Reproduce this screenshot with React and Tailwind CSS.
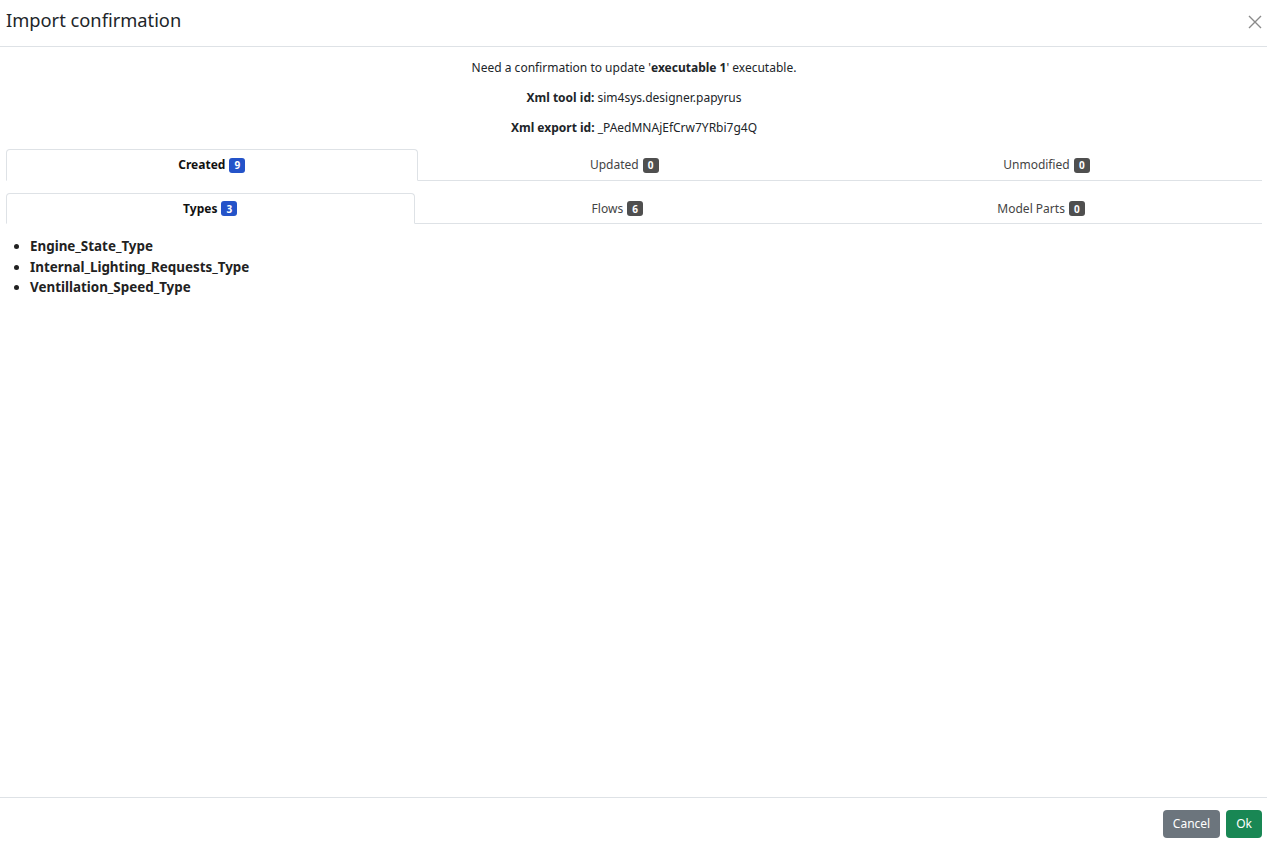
import React from "react";

function Badge({ n, blue }) {
  return (
    <span
      className={
        "ml-[4px] inline-flex h-[15px] min-w-[16px] items-center justify-center rounded-[3px] px-[5px] text-[10px] font-bold leading-none text-white " +
        (blue ? "bg-[#2453c9]" : "bg-[#4f4f4f]")
      }
    >
      {n}
    </span>
  );
}

function Tabs({ items, h }) {
  return (
    <div className="flex border-b border-[#dee2e6]">
      {items.map((t, i) => (
        <div
          key={t.label}
          className={
            "flex flex-auto items-center justify-center -mb-px rounded-t-[4px] border text-[12px] " +
            (t.active
              ? "border-[#dee2e6] border-b-white font-bold text-[#111]"
              : "border-transparent text-[#444]") +
            " " +
            h
          }
        >
          <span>{t.label}</span>
          <Badge n={t.n} blue={t.active} />
        </div>
      ))}
    </div>
  );
}

export default function App() {
  return (
    <div
      className="flex h-[841px] w-full flex-col bg-white text-[#212529]"
      style={{ fontFamily: '"Noto Sans", "Open Sans", sans-serif' }}
    >
      <div className="flex h-[47px] shrink-0 items-center justify-between border-b border-[#dee2e6] pb-[5px] pl-[6px] pr-[5px]">
        <h1 className="text-[18.3px] font-normal leading-none text-[#212529]">Import confirmation</h1>
        <svg width="14" height="14" viewBox="0 0 14 14" className="mt-[2px]">
          <path d="M1 1L13 13M13 1L1 13" stroke="#8a8a8a" strokeWidth="1.4" />
        </svg>
      </div>
      <div className="flex flex-1 flex-col px-[6px] pt-[12px] pr-[5px]">
        <div className="text-center text-[12px] leading-[18px]">
          <p className="mb-[12px]">
            Need a confirmation to update '<b>executable 1</b>' executable.
          </p>
          <p className="mb-[12px]">
            <b>Xml tool id:</b> sim4sys.designer.papyrus
          </p>
          <p>
            <b>Xml export id:</b> _PAedMNAjEfCrw7YRbi7g4Q
          </p>
        </div>
        <div className="mt-[12px]">
          <Tabs
            h="h-[32px]"
            items={[
              { label: "Created", n: 9, active: true },
              { label: "Updated", n: 0 },
              { label: "Unmodified", n: 0 },
            ]}
          />
        </div>
        <div className="mt-[12px]">
          <Tabs
            h="h-[31px]"
            items={[
              { label: "Types", n: 3, active: true },
              { label: "Flows", n: 6 },
              { label: "Model Parts", n: 0 },
            ]}
          />
        </div>
        <ul className="mt-[12px] list-disc pl-[24px] text-[13.4px] font-bold leading-[20.5px] text-[#222]">
          <li>Engine_State_Type</li>
          <li>Internal_Lighting_Requests_Type</li>
          <li>Ventillation_Speed_Type</li>
        </ul>
      </div>
      <div className="flex shrink-0 justify-end gap-[6px] border-t border-[#dee2e6] pb-[3px] pr-[5px] pt-[12px]">
        <button className="h-[28px] rounded-[4px] bg-[#6c757d] px-[10px] text-[12px] text-white">Cancel</button>
        <button className="h-[28px] rounded-[4px] bg-[#198754] px-[10px] text-[12px] text-white">Ok</button>
      </div>
    </div>
  );
}
